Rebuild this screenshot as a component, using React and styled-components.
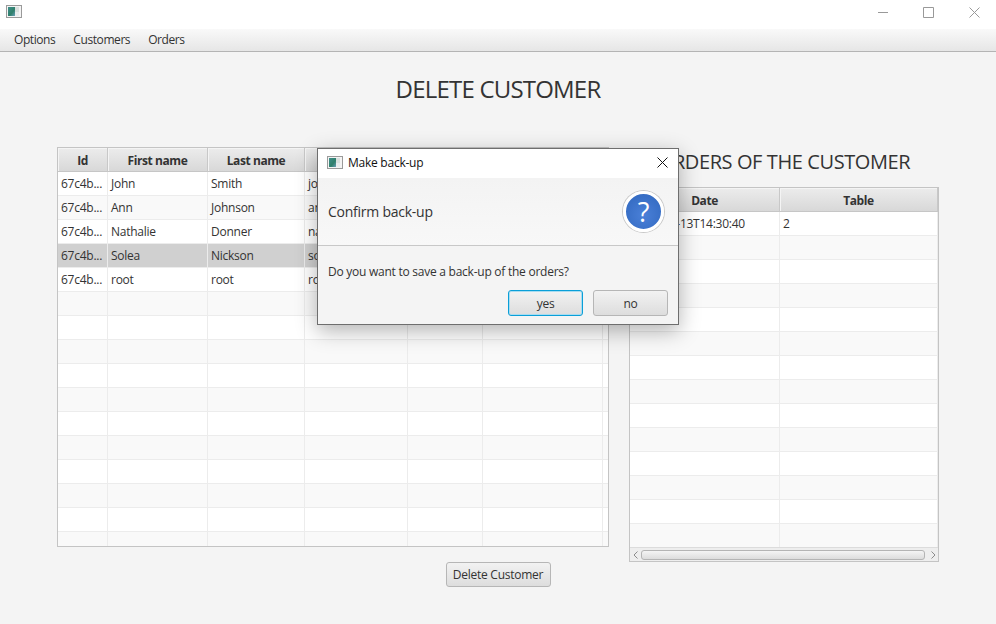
import React from "react";
import styled, { createGlobalStyle } from "styled-components";

const GlobalStyle = createGlobalStyle`
  html, body {
    margin: 0;
    height: 100%;
    overflow: hidden;
    background: #f4f4f4;
  }
  * { box-sizing: border-box; }
`;

const Window = styled.div`
  position: relative;
  width: 996px;
  height: 624px;
  display: flex;
  flex-direction: column;
  background: #f4f4f4;
  color: #333;
  font-family: "Open Sans", "Noto Sans", sans-serif;
  font-size: 12px;
  letter-spacing: -0.25px;
`;

const TitleBar = styled.div`
  height: 29px;
  flex: none;
  display: flex;
  align-items: center;
  justify-content: space-between;
  padding: 0 16px 5px 6px;
  background: #fff;
`;

const WindowControls = styled.div`
  display: flex;
  align-items: center;
  gap: 35px;
  color: #999;
`;

const MenuBar = styled.div`
  height: 23px;
  flex: none;
  display: flex;
  align-items: center;
  gap: 18px;
  padding: 0 0 1px 14px;
  background: linear-gradient(#f9f9f9, #e6e6e6);
  border-bottom: 1px solid #b4b4b4;
  letter-spacing: -0.42px;
`;

const PageTitle = styled.h1`
  height: 95px;
  flex: none;
  margin: 0;
  padding-top: 20px;
  text-align: center;
  font-size: 24px;
  line-height: 33px;
  font-weight: 400;
  letter-spacing: -0.8px;
`;

const TablesRow = styled.div`
  height: 415px;
  flex: none;
  display: flex;
  gap: 20px;
  padding-left: 57px;
`;

const OrdersColumn = styled.div`
  width: 310px;
  display: flex;
  flex-direction: column;
`;

const OrdersHeading = styled.h2`
  height: 40px;
  flex: none;
  margin: 0;
  text-align: center;
  font-size: 20px;
  line-height: 30px;
  font-weight: 400;
  letter-spacing: -0.4px;
  white-space: nowrap;
`;

const TableFrame = styled.div`
  width: ${(p) => p.$width}px;
  height: ${(p) => p.$height}px;
  display: flex;
  flex-direction: column;
  overflow: hidden;
  background: #fff;
  border: 1px solid #c4c4c4;
`;

const HeaderRow = styled.div`
  height: 24px;
  flex: none;
  display: flex;
  background: linear-gradient(#ececec, #d8d8d8);
  border-bottom: 1px solid #c6c6c6;
`;

const HeaderCell = styled.div`
  flex: 0 0 ${(p) => p.$width}px;
  display: flex;
  align-items: center;
  justify-content: center;
  padding-top: 2px;
  font-weight: 700;
  letter-spacing: -0.42px;
  border-right: 1px solid #c8c8c8;
  box-shadow: inset 1px 1px 0 #f4f4f4;
`;

const RowsArea = styled.div`
  flex: 1;
  min-height: 0;
  overflow: hidden;
`;

const Row = styled.div`
  height: 24px;
  display: flex;
  background: ${(p) => (p.$selected ? "#d0d0d0" : p.$odd ? "#f9f9f9" : "#fff")};
  border-bottom: 1px solid #ececec;
`;

const Cell = styled.div`
  flex: 0 0 ${(p) => p.$width}px;
  padding: 0 3px;
  line-height: 23px;
  overflow: hidden;
  white-space: nowrap;
  border-right: 1px solid #ececec;
`;

const ScrollBar = styled.div`
  height: 14px;
  flex: none;
  display: flex;
  align-items: center;
  gap: 3px;
  padding: 0 2px 0 3px;
  color: #8c8c8c;
  background: #eeeeee;
  border-top: 1px solid #dcdcdc;
`;

const ScrollThumb = styled.div`
  flex: 1;
  height: 10px;
  margin-right: 3px;
  border: 1px solid #b4b4b4;
  border-radius: 3px;
  background: linear-gradient(#f4f4f4, #dcdcdc);
`;

const Footer = styled.div`
  display: flex;
  justify-content: center;
`;

const Button = styled.button`
  height: ${(p) => p.$height || 26}px;
  width: ${(p) => p.$width}px;
  padding: 0;
  font: inherit;
  letter-spacing: inherit;
  color: #333;
  border: 1px solid ${(p) => (p.$focused ? "#0a9fd8" : "#b6b6b6")};
  border-radius: 3px;
  background: linear-gradient(#f2f2f2, #dddddd);
  box-shadow: ${(p) => (p.$focused ? "inset 0 0 0 1px #a8dcf0" : "none")};
`;

const Dialog = styled.div`
  position: absolute;
  left: 317px;
  top: 148px;
  width: 362px;
  height: 177px;
  display: flex;
  flex-direction: column;
  background: #f4f4f4;
  border: 1px solid #6e6e6e;
  box-shadow: 0 6px 20px rgba(0, 0, 0, 0.3);
`;

const DialogTitle = styled.div`
  height: 29px;
  flex: none;
  display: flex;
  align-items: center;
  gap: 5px;
  padding: 0 10px 2px 9px;
  background: #fff;
  color: #111;
`;

const DialogTitleText = styled.span`
  flex: 1;
`;

const DialogHeader = styled.div`
  height: 68px;
  flex: none;
  display: flex;
  align-items: center;
  justify-content: space-between;
  padding: 0 14px 0 10px;
  background: linear-gradient(#f3f3f3, #f8f8f8);
  border-bottom: 1px solid #c8c8c8;
  font-size: 14px;
`;

const QuestionIcon = styled.div`
  width: 41px;
  height: 41px;
  display: flex;
  align-items: center;
  justify-content: center;
  border-radius: 50%;
  background: radial-gradient(circle at 50% 60%, #4a80d8, #2f66bd);
  border: 3px solid #fff;
  box-shadow: 0 0 0 1px #c9c9c9;
  color: #fff;
  font-size: 27px;
  line-height: 1;
`;

const DialogBody = styled.div`
  flex: 1;
  display: flex;
  flex-direction: column;
  padding: 17px 10px 0;
`;

const DialogActions = styled.div`
  display: flex;
  justify-content: flex-end;
  gap: 10px;
  margin-top: 10px;
`;

const AppIcon = () => (
  <svg width="16" height="14" viewBox="0 0 16 14">
    <defs>
      <linearGradient id="appIconFill" x1="0" y1="0" x2="1" y2="1">
        <stop offset="0" stopColor="#3f8f8c" />
        <stop offset="0.6" stopColor="#2f7f6a" />
        <stop offset="1" stopColor="#6a9fb8" />
      </linearGradient>
    </defs>
    <rect x="0.5" y="0.5" width="15" height="12" fill="#f4f4f4" stroke="#9a9a9a" />
    <rect x="2" y="2" width="7" height="9" fill="url(#appIconFill)" />
    <rect x="9" y="2" width="4" height="5" fill="#d8e0de" />
    <rect x="9" y="7" width="4" height="4" fill="#e8ecec" />
  </svg>
);

const Chevron = ({ right }) => (
  <svg width="5" height="8" viewBox="0 0 5 8" fill="none" stroke="currentColor">
    <path d={right ? "M0.5 0.5 L4 4 L0.5 7.5" : "M4.5 0.5 L1 4 L4.5 7.5"} />
  </svg>
);

const WindowIcon = ({ size, d, color = "currentColor" }) => (
  <svg width={size} height={size} viewBox={`0 0 ${size} ${size}`} fill="none" stroke={color}>
    <path d={d} />
  </svg>
);

const customerCols = [50, 100, 97, 103, 75, 120];
const orderCols = [150, 158];

const customers = [
  ["67c4b...", "John", "Smith", "jo"],
  ["67c4b...", "Ann", "Johnson", "an"],
  ["67c4b...", "Nathalie", "Donner", "na"],
  ["67c4b...", "Solea", "Nickson", "so"],
  ["67c4b...", "root", "root", "ro"],
];

function DataRows({ cols, data, count, selected }) {
  return (
    <RowsArea>
      {Array.from({ length: count }, (_, i) => (
        <Row key={i} $odd={i % 2 === 1} $selected={i === selected}>
          {cols.map((w, c) => (
            <Cell key={c} $width={w}>
              {data[i] ? data[i][c] : ""}
            </Cell>
          ))}
        </Row>
      ))}
    </RowsArea>
  );
}

export default function App() {
  return (
    <Window>
      <GlobalStyle />
      <TitleBar>
        <AppIcon />
        <WindowControls>
          <WindowIcon size={11} d="M1 5.5 H11" />
          <WindowIcon size={11} d="M0.5 0.5 H10.5 V10.5 H0.5 Z" />
          <WindowIcon size={11} d="M0.5 0.5 L10.5 10.5 M10.5 0.5 L0.5 10.5" />
        </WindowControls>
      </TitleBar>

      <MenuBar>
        <span>Options</span>
        <span>Customers</span>
        <span>Orders</span>
      </MenuBar>

      <PageTitle>DELETE CUSTOMER</PageTitle>

      <TablesRow>
        <TableFrame $width={552} $height={400}>
          <HeaderRow>
            <HeaderCell $width={50}>Id</HeaderCell>
            <HeaderCell $width={100}>First name</HeaderCell>
            <HeaderCell $width={97}>Last name</HeaderCell>
            <HeaderCell $width={103} />
            <HeaderCell $width={75} />
            <HeaderCell $width={120} />
          </HeaderRow>
          <DataRows cols={customerCols} data={customers} count={16} selected={3} />
        </TableFrame>

        <OrdersColumn>
          <OrdersHeading>ORDERS OF THE CUSTOMER</OrdersHeading>
          <TableFrame $width={310} $height={375}>
            <HeaderRow>
              <HeaderCell $width={150}>Date</HeaderCell>
              <HeaderCell $width={158}>Table</HeaderCell>
            </HeaderRow>
            <DataRows cols={orderCols} data={[["2025-03-13T14:30:40", "2"]]} count={14} />
            <ScrollBar>
              <Chevron />
              <ScrollThumb />
              <Chevron right />
            </ScrollBar>
          </TableFrame>
        </OrdersColumn>
      </TablesRow>

      <Footer>
        <Button $width={105} $height={25}>Delete Customer</Button>
      </Footer>

      <Dialog>
        <DialogTitle>
          <AppIcon />
          <DialogTitleText>Make back-up</DialogTitleText>
          <WindowIcon size={11} color="#111" d="M0.5 0.5 L10.5 10.5 M10.5 0.5 L0.5 10.5" />
        </DialogTitle>
        <DialogHeader>
          <span>Confirm back-up</span>
          <QuestionIcon>?</QuestionIcon>
        </DialogHeader>
        <DialogBody>
          <span>Do you want to save a back-up of the orders?</span>
          <DialogActions>
            <Button $width={75} $focused>yes</Button>
            <Button $width={75}>no</Button>
          </DialogActions>
        </DialogBody>
      </Dialog>
    </Window>
  );
}
